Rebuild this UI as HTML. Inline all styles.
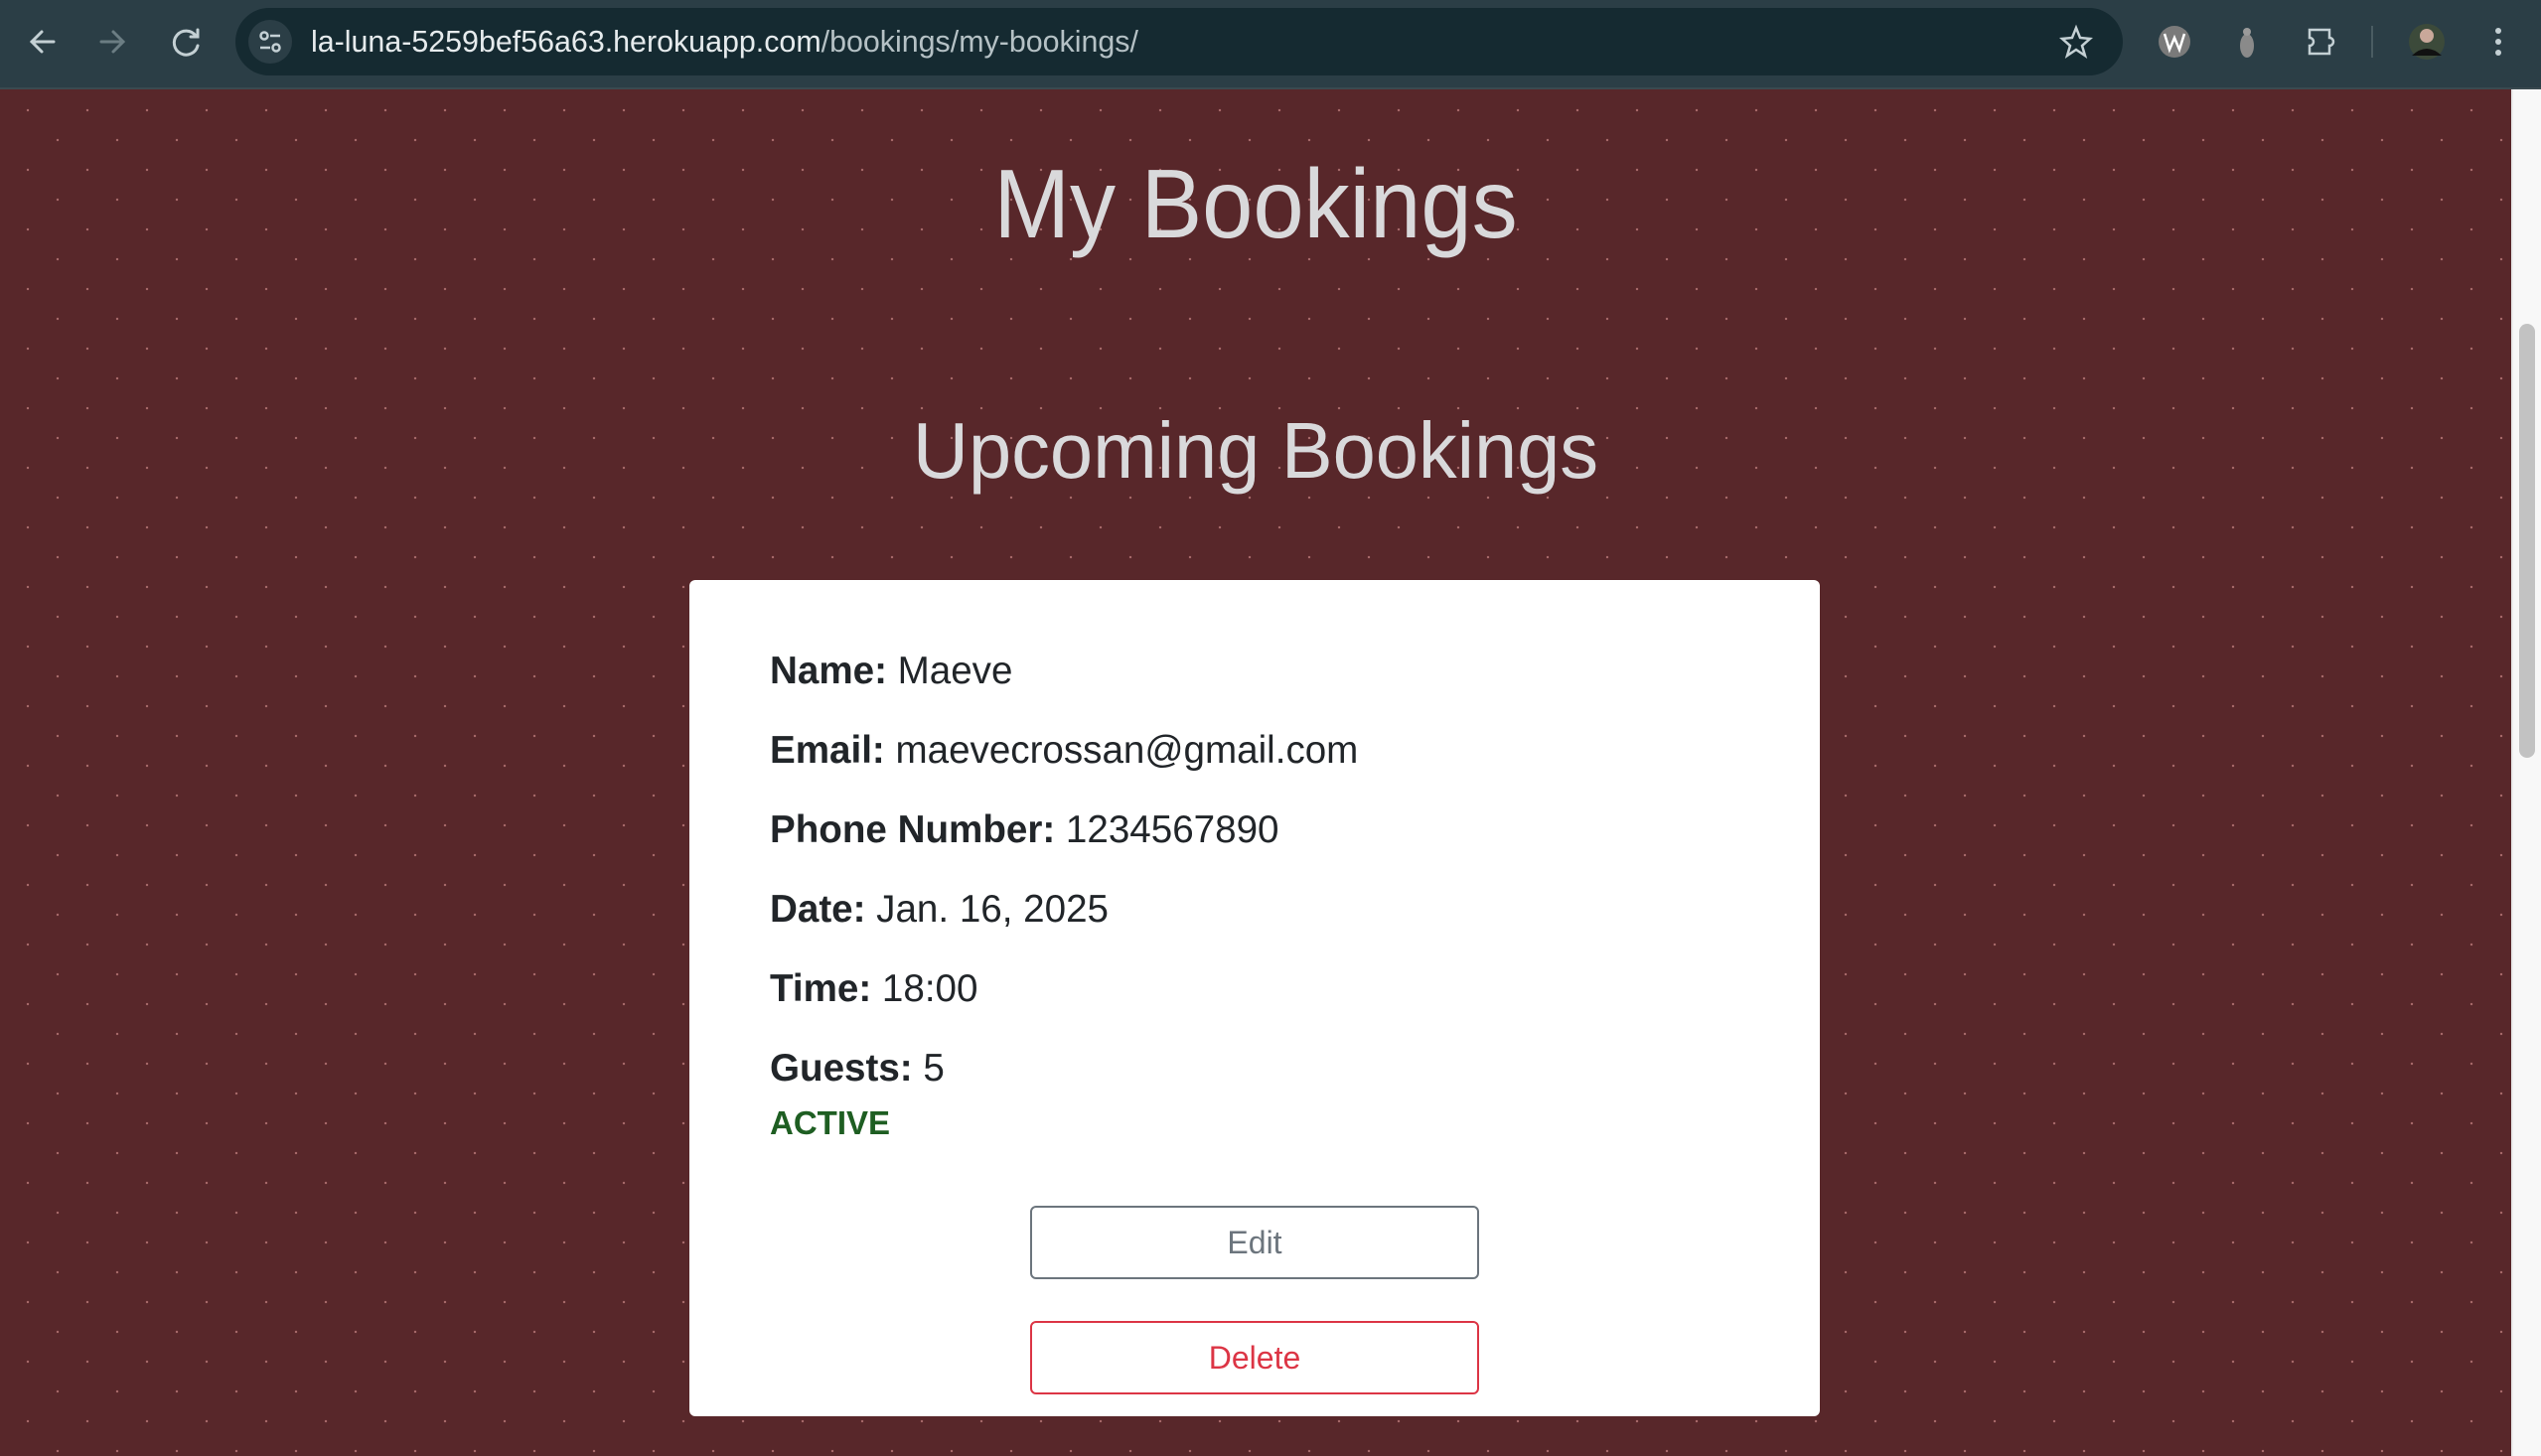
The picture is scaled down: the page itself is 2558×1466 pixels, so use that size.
<!DOCTYPE html>
<html><head><meta charset="utf-8"><style>
*{margin:0;padding:0;box-sizing:border-box}
html,body{width:2558px;height:1466px;overflow:hidden;font-family:"Liberation Sans",sans-serif}
body{background:#58272a;position:relative}
#bar{position:absolute;left:0;top:0;width:2558px;height:90px;background:#2b3e46;border-bottom:2px solid #3a4a50}
#url{position:absolute;left:237px;top:8px;width:1900px;height:68px;background:#152a31;border-radius:34px}
#bg{position:absolute;left:0;top:90px;width:2528px;height:1376px;
background-image:radial-gradient(circle,#a86a6a 1px,transparent 1.4px),radial-gradient(circle,#a86a6a 1px,transparent 1.4px);
background-size:60px 60px;background-position:-2px -9px,28px 21px}
#sb{position:absolute;left:2528px;top:90px;width:30px;height:1376px;background:#f8f8f8;border-left:2px solid #ececec}
#thumb{position:absolute;left:2536px;top:326px;width:16px;height:437px;background:#c2c2c2;border-radius:8px}
.h{position:absolute;left:0;width:2528px;text-align:center;color:#d9d9db;font-weight:normal}
#card{position:absolute;left:694px;top:584px;width:1138px;height:842px;background:#fff;border-radius:6px}
.l{position:absolute;left:775px;font-size:38.6px;line-height:40px;color:#212529;white-space:nowrap}
.l b{font-weight:bold}
.btn{position:absolute;left:1037px;width:452px;height:74px;border-radius:6px;background:#fff;text-align:center;font-size:32px;line-height:70px}
</style></head><body>
<div id="bar">
<svg width="2558" height="90" style="position:absolute;left:0;top:0">
<g stroke="#c4d0d4" stroke-width="3" fill="none" stroke-linecap="round">
<path d="M54 42H32M42 32L32 42L42 52"/>
<path d="M102 42H124M114 32L124 42L114 52" stroke="#6b7d83"/>
<path d="M197 36A12 12 0 1 0 199 46M199 30V37H192"/>
</g>
</svg>
<div id="url"></div>
<svg width="2558" height="90" style="position:absolute;left:0;top:0">
<circle cx="272" cy="42" r="22" fill="#2b3e46"/>
<g stroke="#c4d0d4" stroke-width="2.5" fill="none">
<circle cx="266" cy="36" r="3.5"/><path d="M272 36H282M262 48H272"/><circle cx="278" cy="48" r="3.5"/>
<path d="M2090 28L2094 38L2104 39L2096 46L2099 56L2090 50L2081 56L2084 46L2076 39L2086 38Z"/>
<path d="M2325 30H2345V38A4 4 0 0 1 2345 46V54H2325V46A4 4 0 0 0 2325 38Z"/>
</g>
<circle cx="2189" cy="42" r="16" fill="#7a7a7a"/>
<path d="M2179 34L2184 50L2189 38L2194 50L2199 34" stroke="#fff" stroke-width="2.5" fill="none"/>
<ellipse cx="2262" cy="46" rx="7" ry="12" fill="#8a8a8a"/><circle cx="2262" cy="32" r="4" fill="#9a9a9a"/>
<rect x="2387" y="26" width="2" height="32" fill="#4a5c62"/>
<circle cx="2443" cy="42" r="18" fill="#3c4a3a"/><circle cx="2443" cy="36" r="7" fill="#c9a89a"/><path d="M2428 56Q2443 42 2458 56Z" fill="#111"/>
<g fill="#c4d0d4"><circle cx="2515" cy="31" r="3"/><circle cx="2515" cy="42" r="3"/><circle cx="2515" cy="53" r="3"/></g>
</svg>
<div style="position:absolute;left:313px;top:23px;font-size:30.4px;line-height:38px;color:#e6ebed;white-space:nowrap">la-luna-5259bef56a63.herokuapp.com<span style="color:#b5c1c5">/bookings/my-bookings/</span></div>
</div>
<div id="bg"></div>
<div id="sb"></div><div id="thumb"></div>
<div class="h" style="top:150px;font-size:98px;line-height:110px;transform:scaleX(0.94)">My Bookings</div>
<div class="h" style="top:409px;font-size:80px;line-height:90px;transform:scaleX(0.97)">Upcoming Bookings</div>
<div id="card"></div>
<div class="l" style="top:656px"><b>Name:</b> Maeve</div>
<div class="l" style="top:736px"><b>Email:</b> maevecrossan@gmail.com</div>
<div class="l" style="top:816px"><b>Phone Number:</b> 1234567890</div>
<div class="l" style="top:896px"><b>Date:</b> Jan. 16, 2025</div>
<div class="l" style="top:976px"><b>Time:</b> 18:00</div>
<div class="l" style="top:1056px"><b>Guests:</b> 5</div>
<div class="l" style="top:1114px;font-size:33px;line-height:34px;color:#1e5e22;font-weight:bold">ACTIVE</div>
<div class="btn" style="top:1214px;border:2px solid #6c757d;color:#6c757d">Edit</div>
<div class="btn" style="top:1330px;border:2px solid #dc3545;color:#dc3545">Delete</div>
</body></html>
